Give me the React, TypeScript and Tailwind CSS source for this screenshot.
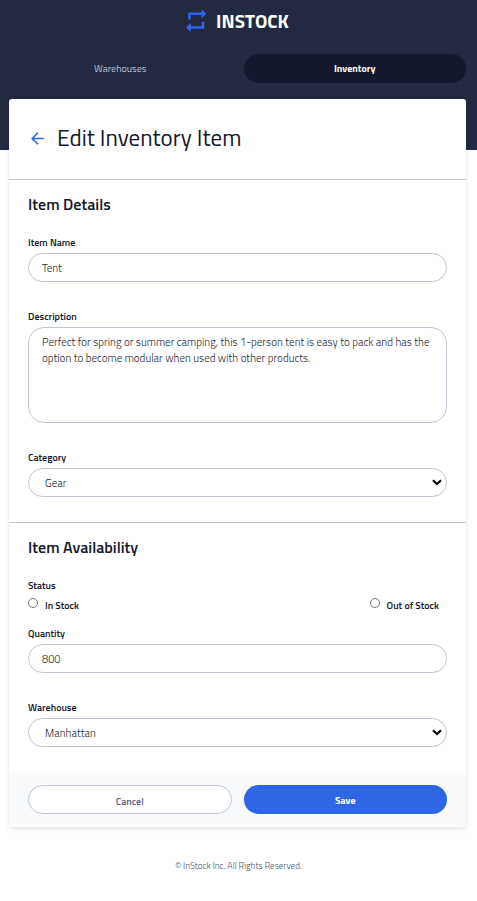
import type { ReactNode } from "react";

const control =
  "block h-[29px] w-full rounded-full border border-[#bdc5d5] bg-white text-[11px] leading-4 font-light text-[#232733] outline-none";

function Field({ id, label, children }: { id: string; label: string; children: ReactNode }) {
  return (
    <div>
      <label htmlFor={id} className="mb-1 block text-[10px] leading-3 font-semibold text-[#13182c]">
        {label}
      </label>
      {children}
    </div>
  );
}

function Select({ id, value }: { id: string; value: string }) {
  return (
    <div className="relative">
      <select id={id} className={`${control} appearance-none px-4 pt-px`}>
        <option>{value}</option>
      </select>
      <svg
        className="pointer-events-none absolute top-[11px] right-1"
        width="12"
        height="7"
        viewBox="0 0 12 7"
        fill="none"
        stroke="#000"
        strokeWidth="2.2"
        aria-hidden="true"
      >
        <path d="M2 1.200 6 5l4-3.800" />
      </svg>
    </div>
  );
}

function StatusOption({ id, label }: { id: string; label: string }) {
  return (
    <div className="flex items-start gap-[7px]">
      <input id={id} type="radio" name="status" className="m-0 size-[10px]" />
      <label htmlFor={id} className="pt-0.5 text-[10px] leading-3 font-semibold text-[#13182c]">
        {label}
      </label>
    </div>
  );
}

function Logo() {
  return (
    <a href="#" className="flex h-6 items-center gap-[9px] text-[19px] leading-6 font-bold text-white">
      <svg width="21" height="24" viewBox="0 0 21 24" fill="#2e66e6" aria-hidden="true">
        <path d="M2.200 10.500V3.400h13.300V.2l4.900 4.500-4.900 4.500V6H4.700v4.500z" />
        <path d="M18.200 12.700v7.100H4.900V23L0 18.500 4.900 14v3.200h10.800v-4.500z" />
      </svg>
      <span>INSTOCK</span>
    </a>
  );
}

export default function App() {
  return (
    <div className="min-h-screen bg-white font-['Titillium_Web','Roboto',sans-serif] text-[#13182c]">
      <header className="h-[150px] bg-[#232940] pt-[9px] pr-[11px] pl-[9px]">
        <div className="flex justify-center">
          <Logo />
        </div>
        <nav className="mt-[21px] grid grid-cols-2 gap-3 text-center text-[10px] leading-[29px]">
          <a href="#" className="rounded-full text-[#bdc5d5]">Warehouses</a>
          <a href="#" className="rounded-full bg-[#13182c] font-bold text-white">Inventory</a>
        </nav>
      </header>

      <main className="-mt-[51px] mr-[11px] ml-[9px] rounded-[3px] bg-white shadow-[0_2px_5px_rgba(19,24,44,0.12)]">
        <div className="flex h-20 items-center gap-3 px-[19px]">
          <a href="#" aria-label="Back" className="flex">
            <svg width="17" height="16" viewBox="0 0 17 16" fill="none" stroke="#2e66e6" strokeWidth="1.6" aria-hidden="true">
              <path d="M15.800 7.500H4.200M10 1.700 4.200 7.500l5.800 5.800" />
            </svg>
          </a>
          <h1 className="pb-0.5 text-[23px] leading-7 font-normal">Edit Inventory Item</h1>
        </div>

        <form>
          <section className="border-t border-[#bdc5d5] px-[19px] pt-3 pb-[25px]">
            <h2 className="text-base leading-6 font-semibold">Item Details</h2>
            <div className="mt-[21px] flex flex-col gap-[29px]">
              <Field id="name" label="Item Name">
                <input id="name" type="text" defaultValue="Tent" className={`${control} px-[13px]`} />
              </Field>
              <Field id="description" label="Description">
                <textarea
                  id="description"
                  className="block h-24 w-full resize-none rounded-2xl border border-[#bdc5d5] bg-white px-[13px] py-[6px] text-[11px] leading-4 font-light text-[#232733] outline-none"
                  defaultValue="Perfect for spring or summer camping, this 1-person tent is easy to pack and has the option to become modular when used with other products."
                />
              </Field>
              <Field id="category" label="Category">
                <Select id="category" value="Gear" />
              </Field>
            </div>
          </section>

          <section className="border-t border-[#bdc5d5] px-[19px] pt-3 pb-[26px]">
            <h2 className="text-base leading-6 font-semibold">Item Availability</h2>
            <fieldset className="mt-[21px]">
              <legend className="text-[10px] leading-3 font-semibold">Status</legend>
              <div className="mt-[6px] flex justify-between pr-2">
                <StatusOption id="in-stock" label="In Stock" />
                <StatusOption id="out-of-stock" label="Out of Stock" />
              </div>
            </fieldset>
            <div className="mt-4 flex flex-col gap-[29px]">
              <Field id="quantity" label="Quantity">
                <input id="quantity" type="text" defaultValue="800" className={`${control} px-[13px]`} />
              </Field>
              <Field id="warehouse" label="Warehouse">
                <Select id="warehouse" value="Manhattan" />
              </Field>
            </div>
          </section>

          <div className="grid grid-cols-2 gap-3 rounded-b-[3px] bg-[#f9fafc] px-[19px] pt-3 pb-[13px] text-[10px]">
            <button type="button" className="h-[29px] rounded-full border border-[#bdc5d5] bg-white pt-[3px] font-semibold text-[#5c6480]">
              Cancel
            </button>
            <button type="submit" className="h-[29px] rounded-full bg-[#2e66e6] pt-px font-bold text-white">
              Save
            </button>
          </div>
        </form>
      </main>

      <footer className="py-8 text-center text-[9px] leading-[14px] font-light text-[#4a5068]">
        © InStock Inc. All Rights Reserved.
      </footer>
    </div>
  );
}
